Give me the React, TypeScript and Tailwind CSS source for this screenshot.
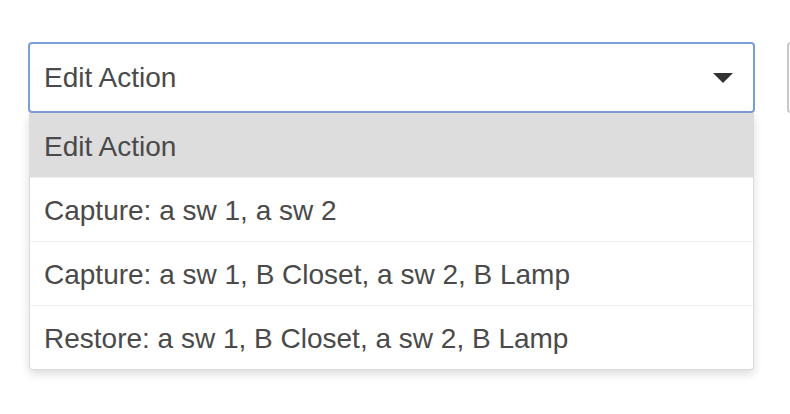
import React from 'react';

const options = [
  'Edit Action',
  'Capture: a sw 1, a sw 2',
  'Capture: a sw 1, B Closet, a sw 2, B Lamp',
  'Restore: a sw 1, B Closet, a sw 2, B Lamp',
];

export default function App() {
  return (
    <div
      className="w-[790px] h-[414px] overflow-hidden bg-white text-[#4a4a4a]"
      style={{ fontFamily: '"Liberation Sans", Arial, sans-serif' }}
    >
      <div className="flex pt-[42px] pl-[28px] gap-[32px]">
        <div className="w-[727px] shrink-0">
          {/* select box */}
          <div className="h-[71px] flex items-center justify-between pl-[14px] pr-[20px] pt-[1px] border-2 border-[#7c9ed6] rounded-[4px] bg-white">
            <span className="text-[28px]">Edit Action</span>
            <svg width="20" height="10" viewBox="0 0 20 10">
              <path d="M0 0 L20 0 L10 10 Z" fill="#333" />
            </svg>
          </div>
          {/* menu */}
          <div className="ml-[1px] w-[725px] border border-[#dcdcdc] border-t-0 rounded-b-[4px] bg-white shadow-[0_4px_10px_rgba(0,0,0,0.14)] overflow-hidden">
            {options.map((o, i) => (
              <div
                key={o}
                className={`h-[64px] flex items-center pl-[14px] pt-[3px] text-[28px] ${
                  i === 0 ? 'bg-[#dddddd]' : 'border-t border-[#efefef]'
                }`}
              >
                {o}
              </div>
            ))}
          </div>
        </div>
        {/* neighbouring control, clipped */}
        <div className="w-[60px] h-[71px] shrink-0 border-2 border-[#c8c8c8] rounded-[4px]" />
      </div>
    </div>
  );
}
